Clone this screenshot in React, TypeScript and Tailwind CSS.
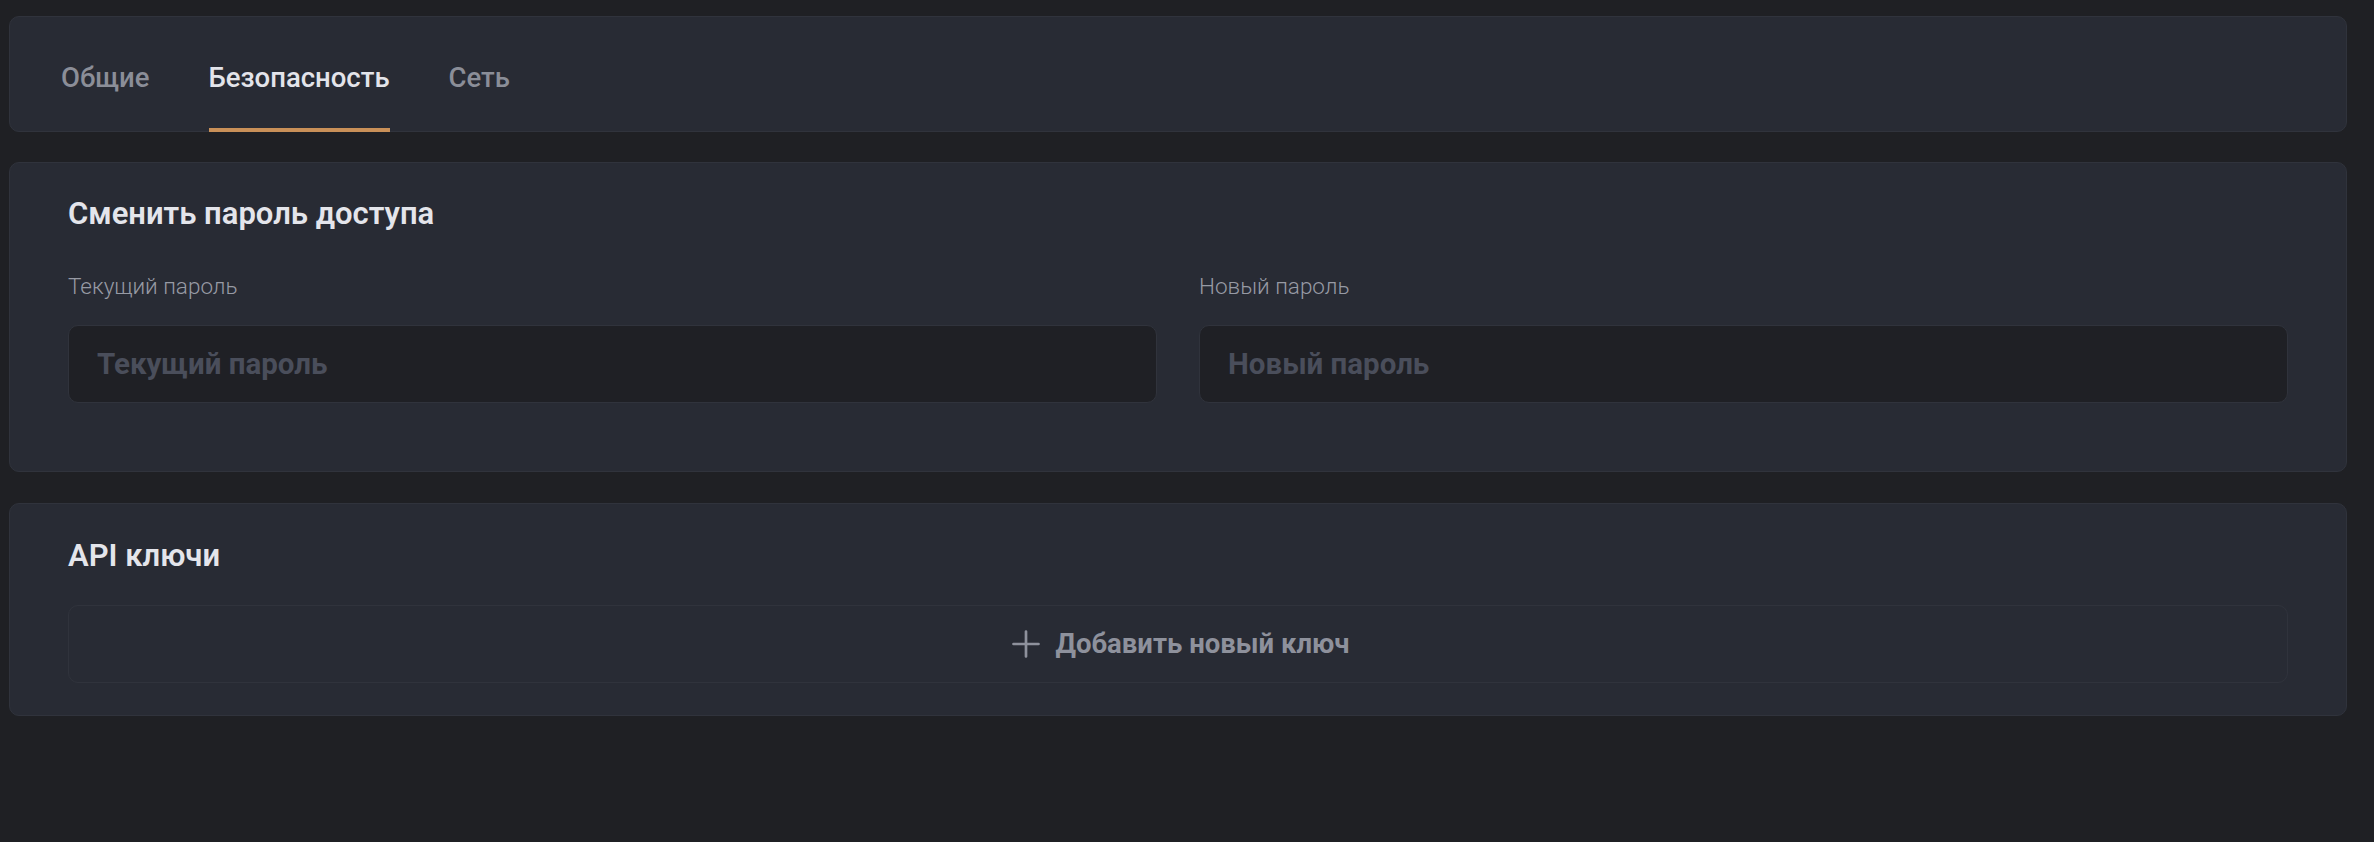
import React, { useState } from "react";

const tabs = ["Общие", "Безопасность", "Сеть"];

function PlusIcon() {
  return (
    <svg width="28" height="28" viewBox="0 0 28 28" fill="none" stroke="currentColor" strokeWidth="2.7" strokeLinecap="round">
      <path d="M14 1.5v25M1.5 14h25" />
    </svg>
  );
}

function Field({ label }: { label: string }) {
  return (
    <div className="flex flex-col">
      <label className="text-[22.5px] leading-[34px] font-light text-[#979aa4]">{label}</label>
      <input
        type="password"
        placeholder={label}
        className="mt-[22px] h-[78px] w-full rounded-[10px] border border-[#30333c] bg-[#1f2025] px-[28px] text-[29.5px] font-bold text-[#e4e5eb] outline-none placeholder:text-[#4a4e5b]"
      />
    </div>
  );
}

export default function App() {
  const [active, setActive] = useState(1);
  return (
    <div
      className="min-h-[842px] w-full bg-[#1f2024] pt-4 pl-[9px] pr-[27px]"
      style={{ fontFamily: "Roboto, 'Noto Sans', sans-serif" }}
    >
      {/* Tabs */}
      <div className="flex h-[116px] gap-[59px] rounded-[10px] border border-[#30333c] bg-[#282b34] pl-[51px]">
        {tabs.map((t, i) => (
          <button
            key={t}
            onClick={() => setActive(i)}
            className={
              "-mb-px border-b-[4px] pt-[41px] pb-[30px] text-[27.5px] leading-[40px] font-medium " +
              (i === active ? "border-[#c99058] text-[#e3e4ea]" : "border-transparent text-[#8b8e98]")
            }
          >
            {t}
          </button>
        ))}
      </div>

      {/* Password */}
      <div className="mt-[30px] rounded-[10px] border border-[#30333c] bg-[#282b34] px-[58px] pt-[33px] pb-[68px]">
        <h2 className="text-[31px] leading-[36px] font-semibold text-[#e4e5eb]">Сменить пароль доступа</h2>
        <div className="mt-[37px] grid grid-cols-2 gap-[42px]">
          <Field label="Текущий пароль" />
          <Field label="Новый пароль" />
        </div>
      </div>

      {/* API keys */}
      <div className="mt-[31px] rounded-[10px] border border-[#30333c] bg-[#282b34] px-[58px] pt-[34px] pb-[32px]">
        <h2 className="text-[31px] leading-[36px] font-semibold text-[#e4e5eb]">API ключи</h2>
        <button className="mt-[31px] flex h-[78px] w-full items-center justify-center gap-[15px] rounded-[10px] border border-[#30333c] pl-[6px] text-[27.5px] font-bold text-[#8e919c]">
          <PlusIcon />
          <span>Добавить новый ключ</span>
        </button>
      </div>
    </div>
  );
}
